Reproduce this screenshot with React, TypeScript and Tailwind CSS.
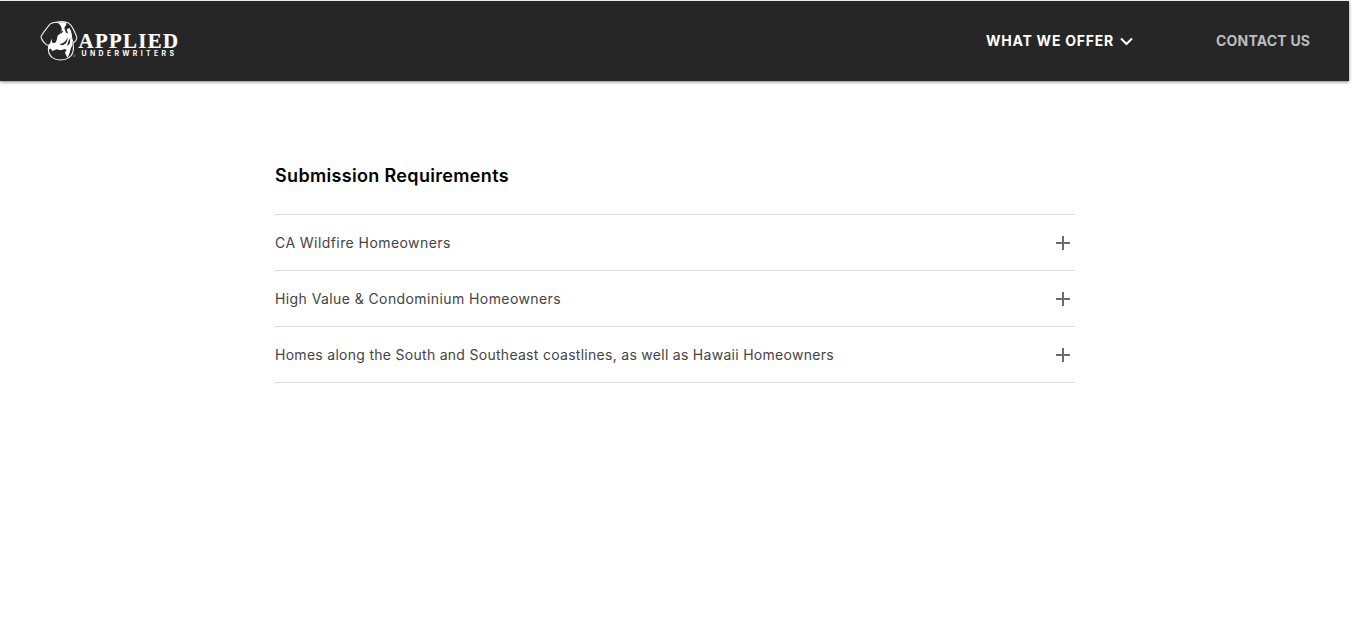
const rows = [
  { title: 'CA Wildfire Homeowners', tracking: 'tracking-[0.43px]' },
  { title: 'High Value & Condominium Homeowners', tracking: 'tracking-[0.41px]' },
  {
    title: 'Homes along the South and Southeast coastlines, as well as Hawaii Homeowners',
    tracking: 'tracking-[0.285px]',
  },
];

function Logo() {
  return (
    <svg className="block h-[46px] w-[144px]" viewBox="0 0 144 46" role="img" aria-label="Applied Underwriters">
      <g transform="translate(-6 -8) scale(.33333)">
        <g fill="none" stroke="#f2f2f2" strokeLinecap="round" strokeLinejoin="round">
          <path strokeWidth="3.2" d="M79 37C69 37 62 40 57 46C48 57 38 69 33 80C34 89 41 97 48 103C53 107 57 106 60 102" />
          <path strokeWidth="3.2" d="M79 37C94 33 112 34 119 42C127 48 132 61 140 80C141 87 137 94 131 98C125 94 126 84 123 74" />
          <path strokeWidth="3.2" d="M56 108C53 121 57 134 67 143C80 153 105 152 116 143C129 136 133 116 129 99" />
        </g>
        <path fill="#fff" d="M79 37L107 37C111 41 109 47 104 50C102 57 107 62 109 69L114 70L110 58L118 54C126 65 126 77 125 86C129 94 129 107 123 114C120 123 119 133 112 143L105 128L110 119L102 117C96 122 86 121 80 118L68 123L60 115L55 124L55 106L60 101L64 86L67 98L75 99C82 93 80 84 84 76C92 71 96 65 95 55C93 46 87 41 79 37Z" />
        <path fill="#262626" d="M87 102C100 102 109 94 112 82C114 92 109 103 97 106ZM95 63L100 62L96 69L90 72ZM115 94L121 84L119 101L111 108Z" />
        <circle cx="133" cy="137" r="3" fill="none" stroke="#aaa" strokeWidth="1.4" />
      </g>
      <text x="42.5" y="29.5" textLength="99.5" lengthAdjust="spacing" fill="#fff" stroke="#fff" strokeWidth=".2" fontFamily="'Liberation Serif', serif" fontWeight="700" fontSize="20.8">APPLIED</text>
      <text x="45.5" y="37.8" textLength="92.5" lengthAdjust="spacing" fill="#fff" fontFamily="Inter, sans-serif" fontWeight="700" fontSize="6.9">UNDERWRITERS</text>
    </svg>
  );
}

export default function App() {
  return (
    <div className="min-h-[643px] bg-white pt-px font-['Inter','Liberation_Sans',sans-serif]">
      <header className="flex h-20 w-[1349px] items-center justify-between bg-[#262626] pl-9 pr-[38px] shadow-[0_1px_3px_rgba(0,0,0,0.5)]">
        <a href="#" className="block"><Logo /></a>
        <nav className="flex items-center text-[14px] leading-5 font-bold whitespace-nowrap">
          <a href="#" className="flex items-center text-white">
            <span className="w-[129px] tracking-[0.75px]">WHAT WE OFFER</span>
            <svg className="ml-[5px] h-3 w-[13px]" viewBox="0 0 13 12" fill="none" stroke="currentColor" strokeWidth="2">
              <path d="M1 3.5 6.5 9 12 3.5" />
            </svg>
          </a>
          <a href="#" className="ml-[83px] w-[95px] tracking-[0.2px] text-[#bdbdbd]">CONTACT US</a>
        </nav>
      </header>
      <main className="ml-[275px] w-[800px] pt-[81px]">
        <h1 className="text-[18px] leading-7 font-semibold tracking-[0.33px] whitespace-nowrap text-black">Submission Requirements</h1>
        <ul className="mt-6 border-t border-[#dcdcdc]">
          {rows.map((row) => (
            <li key={row.title} className="border-b border-[#dcdcdc]">
              <button className="flex h-[55px] w-full items-center justify-between pr-[5px] text-left text-[14px] leading-5 text-[#444]">
                <span className={row.tracking}>{row.title}</span>
                <svg className="h-[14px] w-[14px] text-[#6b6b6b]" viewBox="0 0 14 14" fill="currentColor" shapeRendering="crispEdges">
                  <path d="M6 0h2v6h6v2H8v6H6V8H0V6h6Z" />
                </svg>
              </button>
            </li>
          ))}
        </ul>
      </main>
    </div>
  );
}
